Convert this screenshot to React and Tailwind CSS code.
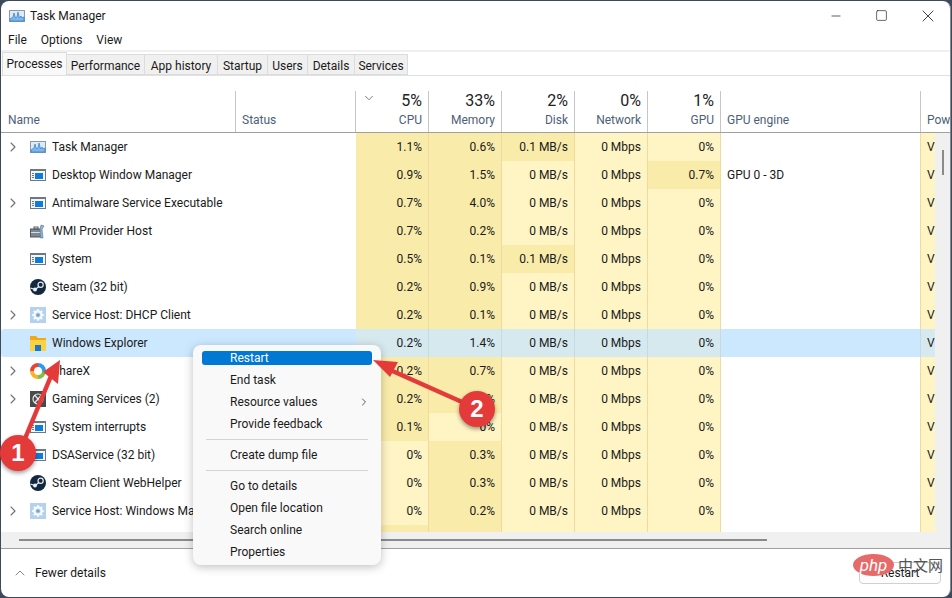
import React from "react";
import { ChevronRight, ChevronDown, ChevronUp, Minus, Square, X } from "lucide-react";

const appFont = { fontFamily: 'Roboto, "Noto Sans", sans-serif' };

function MonitorIcon() {
  return (
    <svg width="16" height="16" viewBox="0 0 16 16">
      <rect x="0.5" y="2.5" width="15" height="11" fill="#dfe9f3" stroke="#8a99a8" />
      <path d="M1 11 L4 9 L5 5 L6.5 10 L8 9 L9 4 L10.5 10 L12 8 L13 10 L15 9 L15 13 L1 13 Z" fill="#7db6ea" stroke="#2f7fd0" strokeWidth="0.7" />
    </svg>
  );
}

function WindowIcon() {
  return (
    <svg width="16" height="16" viewBox="0 0 16 16">
      <rect x="0.5" y="2.5" width="15" height="11" fill="#f4f6f8" stroke="#6d7885" />
      <rect x="0.5" y="2.5" width="15" height="1.5" fill="#6d7885" />
      <rect x="5" y="6" width="8" height="6" fill="#0f7bdc" />
      <path d="M2 6.5h2M2 8.5h2M2 10.5h2" stroke="#6d7885" />
    </svg>
  );
}

function WmiIcon() {
  return (
    <svg width="16" height="16" viewBox="0 0 16 16">
      <rect x="0.5" y="6" width="11" height="8" fill="#7d8893" stroke="#4f5963" />
      <rect x="4" y="4" width="4" height="2" fill="none" stroke="#4f5963" />
      <path d="M1 9.5h10" stroke="#d8dde2" />
      <path d="M11 2l3 1-2 3 1 9h-2.5l-.5-9z" fill="#8fb3d9" stroke="#55738f" strokeWidth="0.6" />
    </svg>
  );
}

function SteamIcon() {
  return (
    <svg width="16" height="16" viewBox="0 0 16 16">
      <circle cx="8" cy="8" r="8" fill="#12283f" />
      <circle cx="10.6" cy="5.8" r="2.6" fill="none" stroke="#e8eef4" strokeWidth="1.2" />
      <circle cx="5" cy="10.6" r="2" fill="#e8eef4" />
      <path d="M0.5 9 L5 10.6 L9 7.5" stroke="#e8eef4" strokeWidth="1.2" fill="none" />
    </svg>
  );
}

function GearIcon() {
  return (
    <svg width="16" height="16" viewBox="0 0 16 16">
      <rect width="16" height="16" fill="#b4d1ee" />
      <circle cx="8" cy="8" r="3.6" fill="none" stroke="#f8fbfe" strokeWidth="2.2" />
      <path d="M8 2.2v2M8 11.8v2M2.2 8h2M11.8 8h2M3.9 3.9l1.4 1.4M10.7 10.7l1.4 1.4M12.1 3.9l-1.4 1.4M5.3 10.7l-1.4 1.4" stroke="#f8fbfe" strokeWidth="2" />
      <circle cx="8" cy="8" r="1.6" fill="#6f9dd0" />
    </svg>
  );
}

function FolderIcon() {
  return (
    <svg width="16" height="16" viewBox="0 0 16 16">
      <path d="M0 1h6l2 2h8v13H0z" fill="#f0a91a" />
      <path d="M0 5h16v11H0z" fill="#fcd03f" />
      <rect x="5" y="10" width="6" height="6" fill="#1877c9" />
    </svg>
  );
}

function ShareXIcon() {
  return (
    <svg width="16" height="16" viewBox="0 0 16 16" fill="none" strokeWidth="4">
      <path d="M8 2a6 6 0 0 1 6 6" stroke="#2f9be8" />
      <path d="M14 8a6 6 0 0 1-6 6" stroke="#7cc243" />
      <path d="M8 14a6 6 0 0 1-6-6" stroke="#f7b32b" />
      <path d="M2 8a6 6 0 0 1 6-6" stroke="#ea4335" />
    </svg>
  );
}

function XboxIcon() {
  return (
    <svg width="16" height="16" viewBox="0 0 16 16">
      <rect width="16" height="16" fill="#4a4a4a" />
      <circle cx="8" cy="8" r="5" fill="none" stroke="#e8e8e8" strokeWidth="1.2" />
      <path d="M5 4.5L11 11.5M11 4.5L5 11.5" stroke="#e8e8e8" strokeWidth="1.3" />
    </svg>
  );
}

const rows = [
  { name: "Task Manager", icon: <MonitorIcon />, exp: true, cpu: "1.1%", mem: "0.6%", disk: "0.1 MB/s", gpu: "0%", diskHot: true },
  { name: "Desktop Window Manager", icon: <WindowIcon />, cpu: "0.9%", mem: "1.5%", disk: "0 MB/s", gpu: "0.7%", gpuHot: true, engine: "GPU 0 - 3D" },
  { name: "Antimalware Service Executable", icon: <WindowIcon />, exp: true, cpu: "0.7%", mem: "4.0%", disk: "0 MB/s", gpu: "0%" },
  { name: "WMI Provider Host", icon: <WmiIcon />, cpu: "0.7%", mem: "0.2%", disk: "0 MB/s", gpu: "0%" },
  { name: "System", icon: <WindowIcon />, cpu: "0.5%", mem: "0.1%", disk: "0.1 MB/s", gpu: "0%", diskHot: true },
  { name: "Steam (32 bit)", icon: <SteamIcon />, cpu: "0.2%", mem: "0.9%", disk: "0 MB/s", gpu: "0%" },
  { name: "Service Host: DHCP Client", icon: <GearIcon />, exp: true, cpu: "0.2%", mem: "0.1%", disk: "0 MB/s", gpu: "0%" },
  { name: "Windows Explorer", icon: <FolderIcon />, selected: true, cpu: "0.2%", mem: "1.4%", disk: "0 MB/s", gpu: "0%" },
  { name: "ShareX", icon: <ShareXIcon />, exp: true, cpu: "0.2%", mem: "0.7%", disk: "0 MB/s", gpu: "0%" },
  { name: "Gaming Services (2)", icon: <XboxIcon />, exp: true, cpu: "0.2%", mem: "0.2%", disk: "0 MB/s", gpu: "0%" },
  { name: "System interrupts", icon: <WindowIcon />, cpu: "0.1%", mem: "0%", memCold: true, disk: "0 MB/s", gpu: "0%" },
  { name: "DSAService (32 bit)", icon: <WindowIcon />, cpu: "0%", cpuCold: true, mem: "0.3%", disk: "0 MB/s", gpu: "0%" },
  { name: "Steam Client WebHelper", icon: <SteamIcon />, cpu: "0%", cpuCold: true, mem: "0.3%", disk: "0 MB/s", gpu: "0%" },
  { name: "Service Host: Windows Manageme", icon: <GearIcon />, exp: true, cpu: "0%", cpuCold: true, mem: "0.2%", disk: "0 MB/s", gpu: "0%" },
];

function HeatCell({ value, hot, selected }) {
  const bg = selected ? "bg-[#d6e9ef] border-[#c4dbe2]" : hot ? "bg-[#f9ecaa] border-[#f1d9a0]" : "bg-[#fff4c4] border-[#f1d9a0]";
  return (
    <div className={`w-[73px] shrink-0 border-r pr-[6px] text-right leading-[28px] ${bg}`}>{value}</div>
  );
}

function ProcessRow({ row }) {
  const sel = row.selected;
  return (
    <div className={`flex h-[28px] text-[12px] text-[#1a1a1a] ${sel ? "bg-[#cce8ff] rounded-l-[3px]" : "bg-white"}`}>
      <div className="flex w-[355px] shrink-0 items-center overflow-hidden whitespace-nowrap">
        <div className="flex w-[29px] shrink-0 justify-start pl-[4px]">
          {row.exp && <ChevronRight size={16} strokeWidth={1.6} className="text-[#707070]" />}
        </div>
        <div className="w-[16px] shrink-0">{row.icon}</div>
        <span className="ml-[6px]">{row.name}</span>
      </div>
      <HeatCell value={row.cpu} hot={!row.cpuCold} selected={sel} />
      <HeatCell value={row.mem} hot={!row.memCold} selected={sel} />
      <HeatCell value={row.disk} hot={row.diskHot} selected={sel} />
      <HeatCell value="0 Mbps" selected={sel} />
      <HeatCell value={row.gpu} hot={row.gpuHot} selected={sel} />
      <div className={`w-[200px] shrink-0 border-r pl-[6px] leading-[28px] ${sel ? "border-[#c4dbe2]" : "border-[#f1d9a0]"}`}>{row.engine}</div>
      <div className={`w-[14px] shrink-0 overflow-hidden pl-[6px] leading-[28px] ${sel ? "bg-[#d6e9ef]" : "bg-[#fff4c4]"}`}>V</div>
    </div>
  );
}

function HeaderCell({ pct, label }) {
  return (
    <div className="flex w-[73px] shrink-0 flex-col items-end justify-between border-r border-[#c6c6c6] pr-[6px]">
      <span className="text-[16px] leading-[20px] text-[#222222]">{pct}</span>
      <span className="pb-[4px] text-[12px] leading-[16px] text-[#4c607a]">{label}</span>
    </div>
  );
}

function Tab({ label, width }) {
  return (
    <div className={`flex h-[21px] items-center justify-center border-y border-r border-[#dcdcdc] bg-[#f0f0f0] pt-[2px] text-[12px] text-[#1a1a1a] ${width}`}>
      {label}
    </div>
  );
}

function MenuItem({ label, arrow }) {
  return (
    <div className="relative h-[22px] pl-[37px] text-[12px] leading-[22px] text-[#1a1a1a]">
      {label}
      {arrow && <ChevronRight size={12} strokeWidth={1.8} className="absolute right-[11px] top-[5px] text-[#444444]" />}
    </div>
  );
}

function MenuSep() {
  return <div className="mx-[13px] my-[4px] h-px bg-[#d4d4d4]" />;
}

function ContextMenu() {
  return (
    <div className="absolute left-[193px] top-[345px] w-[188px] rounded-[8px] bg-[#f9f9f9] pb-[2px] pt-[6px] shadow-[0_2px_10px_rgba(0,0,0,0.25)]">
      <div className="mx-[9px] mb-[4px] h-[14px] rounded-[3px] bg-[#0078d4] pl-[28px] text-[12px] leading-[14px] text-white">Restart</div>
      <MenuItem label="End task" />
      <MenuItem label="Resource values" arrow />
      <MenuItem label="Provide feedback" />
      <MenuSep />
      <MenuItem label="Create dump file" />
      <MenuSep />
      <MenuItem label="Go to details" />
      <MenuItem label="Open file location" />
      <MenuItem label="Search online" />
      <MenuItem label="Properties" />
    </div>
  );
}

function Badge({ n, className }) {
  return (
    <div className={`absolute flex h-[36px] w-[36px] items-center justify-center rounded-full bg-[#e53a3a] text-[24px] font-bold text-white shadow-[0_2px_4px_rgba(0,0,0,0.4)] ${className}`} style={{ fontFamily: '"Liberation Sans", sans-serif' }}>
      {n}
    </div>
  );
}

function Annotations() {
  return (
    <>
      <svg className="absolute left-0 top-0" width="952" height="598">
        <path d="M24 441 L51 376" stroke="#e53a3a" strokeWidth="4.5" fill="none" />
        <path d="M60 360 L43 372 L58 384 Z" fill="#e53a3a" />
        <path d="M462 402 L388 369" stroke="#e53a3a" strokeWidth="4.5" fill="none" />
        <path d="M373 360 L398 362 L390 377 Z" fill="#e53a3a" />
      </svg>
      <Badge n="1" className="left-0 top-[435px]" />
      <Badge n="2" className="left-[459px] top-[391px]" />
    </>
  );
}

function Watermark() {
  return (
    <>
      <div className="absolute left-[853px] top-[554px] flex h-[22px] w-[41px] items-center justify-center rounded-[50%] bg-[#e66a6a] text-[17px] italic leading-none text-white">php</div>
      <div className="absolute left-[898px] top-[556px] text-[15px] leading-[18px] text-[#555555]" style={{ fontFamily: '"Noto Sans CJK SC", sans-serif' }}>中文网</div>
    </>
  );
}

export default function App() {
  return (
    <div className="relative h-[598px] w-[952px] overflow-hidden bg-[#3c4a5c]" style={appFont}>
      <div className="m-px flex h-[596px] w-[950px] flex-col overflow-hidden rounded-[8px] border-r border-[#8a8a8a] bg-white">
        {/* title bar */}
        <div className="flex h-[29px] shrink-0 items-center pl-[8px]">
          <MonitorIcon />
          <span className="ml-[5px] text-[12px] text-[#1a1a1a]">Task Manager</span>
          <div className="ml-auto flex items-center text-[#1a1a1a]">
            <Minus size={14} strokeWidth={1.2} />
            <Square size={13} strokeWidth={1.2} className="ml-[32px]" />
            <X size={20} strokeWidth={1} className="ml-[30px] mr-[12px]" />
          </div>
        </div>
        {/* menu */}
        <div className="flex h-[20px] shrink-0 items-center gap-[14px] pl-[7px] text-[12px] text-[#1a1a1a]">
          <span>File</span>
          <span>Options</span>
          <span>View</span>
        </div>
        {/* tabs */}
        <div className="flex h-[26px] shrink-0 items-end border-b border-[#e0e0e0] border-t-2 border-t-[#f0f0f0] pl-px">
          <div className="flex h-[23px] w-[65px] items-center justify-center border-x border-t border-[#dcdcdc] bg-[#f9f9f9] text-[12px] text-[#1a1a1a]">Processes</div>
          <Tab label="Performance" width="w-[78px]" />
          <Tab label="App history" width="w-[73px]" />
          <Tab label="Startup" width="w-[50px]" />
          <Tab label="Users" width="w-[40px]" />
          <Tab label="Details" width="w-[47px]" />
          <Tab label="Services" width="w-[53px]" />
        </div>
        {/* table header */}
        <div className="mt-[15px] flex h-[42px] shrink-0 border-b border-[#a0a0a0]">
          <div className="flex w-[235px] shrink-0 items-end border-r border-[#c6c6c6] pb-[4px] pl-[7px] text-[12px] leading-[16px] text-[#4c607a]">Name</div>
          <div className="flex w-[120px] shrink-0 items-end border-r border-[#c6c6c6] pb-[4px] pl-[6px] text-[12px] leading-[16px] text-[#4c607a]">Status</div>
          <div className="relative flex">
            <ChevronDown size={14} strokeWidth={1.5} className="absolute left-[6px] top-0 text-[#5f7088]" />
            <HeaderCell pct="5%" label="CPU" />
          </div>
          <HeaderCell pct="33%" label="Memory" />
          <HeaderCell pct="2%" label="Disk" />
          <HeaderCell pct="0%" label="Network" />
          <HeaderCell pct="1%" label="GPU" />
          <div className="flex w-[200px] shrink-0 items-end border-r border-[#c6c6c6] pb-[4px] pl-[6px] text-[12px] leading-[16px] text-[#4c607a]">GPU engine</div>
          <div className="flex flex-1 items-end overflow-hidden pb-[4px] pl-[6px] text-[12px] leading-[16px] text-[#4c607a]">Power</div>
        </div>
        {/* table body and scrollbars */}
        <div className="flex h-[416px] shrink-0 border-b border-[#a0a0a0]">
          <div className="flex w-[934px] shrink-0 flex-col">
            <div className="h-[399px] overflow-hidden">
              {rows.map(row => (
                <ProcessRow key={row.name} row={row} />
              ))}
              <ProcessRow row={{ name: "", cpu: "", mem: "", disk: "", gpu: "" }} />
            </div>
            <div className="flex h-[16px] items-center bg-[#f0f0f0] pl-[18px]">
              <div className="h-[2px] w-[748px] bg-[#8a8a8a]" />
            </div>
          </div>
          <div className="flex-1 bg-[#f0f0f0] pl-[7px] pt-[17px]">
            <div className="h-[25px] w-[2px] bg-[#8a8a8a]" />
          </div>
        </div>
        {/* footer */}
        <div className="flex flex-1 items-center pl-[11px] pr-[9px]">
          <ChevronUp size={16} strokeWidth={1.2} className="text-[#666666]" />
          <span className="ml-[7px] text-[12px] text-[#1a1a1a]">Fewer details</span>
          <div className="ml-auto flex h-[22px] w-[82px] items-center justify-center rounded-[4px] border border-[#d0d0d0] bg-[#fdfdfd] text-[12px] text-[#1a1a1a]">Restart</div>
        </div>
      </div>
      <ContextMenu />
      <Annotations />
      <Watermark />
    </div>
  );
}
